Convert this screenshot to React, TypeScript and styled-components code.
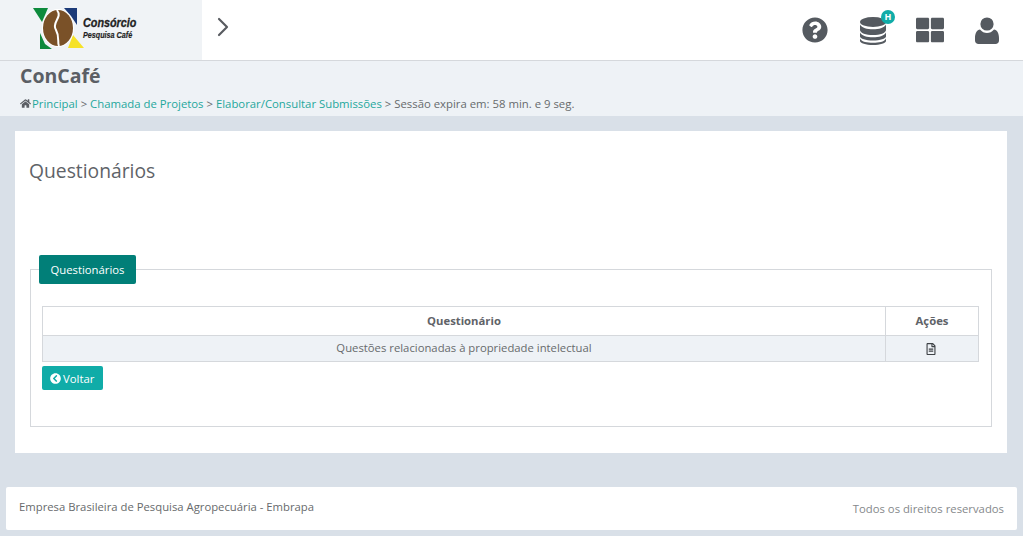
import React, { FC } from "react";
import styled, { createGlobalStyle } from "styled-components";
import { FaQuestionCircle, FaThLarge, FaHome, FaChevronCircleLeft, FaRegFileAlt } from "react-icons/fa";
import { FiChevronRight } from "react-icons/fi";

const GlobalStyle = createGlobalStyle`
  html, body {
    margin: 0;
    padding: 0;
    background: #d9e0e8;
    font-family: "Open Sans", "DejaVu Sans", sans-serif;
    color: #676a6c;
    overflow: hidden;
  }
  * { box-sizing: border-box; }
`;

const Page = styled.div`
  width: 1023px;
  height: 536px;
  display: flex;
  flex-direction: column;
`;

const TopBar = styled.header`
  height: 61px;
  display: flex;
  align-items: stretch;
  background: #fff;
  border-bottom: 1px solid #d5d8dc;
`;

const LogoBlock = styled.div`
  width: 202px;
  background: #f0f3f6;
  display: flex;
  align-items: flex-start;
  padding: 8px 0 0 33px;
  gap: 4px;
  svg {
    overflow: visible;
  }
`;

const LogoWords = styled.div`
  display: flex;
  flex-direction: column;
  align-items: flex-start;
  padding-top: 9px;
  font-family: "Liberation Sans", sans-serif;
  font-style: italic;
  font-weight: 700;
  color: #1f1f1f;
`;

const LogoTop = styled.span`
  font-size: 12px;
  line-height: 12px;
  transform: scaleX(0.9);
  transform-origin: left;
  white-space: nowrap;
  -webkit-text-stroke: 0.3px #1f1f1f;
`;

const LogoBottom = styled.span`
  margin-top: 1px;
  font-size: 9px;
  line-height: 10px;
  transform: scaleX(0.8);
  transform-origin: left;
  white-space: nowrap;
  -webkit-text-stroke: 0.2px #1f1f1f;
`;

const Toggle = styled.div`
  display: flex;
  align-items: center;
  padding: 0 0 6px 5px;
  color: #585b60;
`;

const TopIcons = styled.nav`
  margin-left: auto;
  display: flex;
  align-items: center;
  padding: 0 7px 0 0;
  color: #555a60;
`;

const TopIcon = styled.div<{ $w: number; $top?: number }>`
  position: relative;
  width: ${(p) => p.$w}px;
  padding-top: ${(p) => p.$top ?? 0}px;
  display: flex;
  justify-content: center;
`;

const Badge = styled.span`
  position: absolute;
  top: -5px;
  right: 6px;
  width: 14px;
  height: 14px;
  border-radius: 50%;
  background: #10aca8;
  color: #fff;
  font-size: 9px;
  font-weight: 700;
  line-height: 14px;
  text-align: center;
`;

const SubHeader = styled.section`
  height: 55px;
  background: #eef2f6;
  padding: 2px 20px 0;
`;

const Title = styled.h1`
  margin: 0;
  font-size: 19.5px;
  line-height: 26px;
  font-weight: 700;
  color: #5b5f65;
`;

const Crumbs = styled.div`
  margin-top: 7px;
  font-size: 11.35px;
  line-height: 16px;
  color: #676a6c;
  white-space: nowrap;
  svg {
    font-size: 11px;
    vertical-align: -1px;
    margin-right: 1px;
    color: #5b5f65;
  }
`;

const CrumbLink = styled.a`
  color: #1ea79c;
`;

const Card = styled.main`
  margin: 15px 16px 0 15px;
  height: 322px;
  background: #fff;
  padding: 26px 15px 0 14px;
`;

const CardTitle = styled.h2`
  margin: 0;
  font-size: 19.3px;
  line-height: 28px;
  font-weight: 400;
  color: #5f6368;
`;

const FieldSet = styled.div`
  margin: 84px 0 0 1px;
  padding: 0 12px 0 11px;
  height: 158px;
  border: 1px solid #d5d8dc;
  position: relative;
`;

const Legend = styled.div`
  position: absolute;
  top: -15px;
  left: 8px;
  width: 97px;
  height: 29px;
  background: #017f78;
  border-radius: 2px;
  color: #fff;
  font-size: 11.3px;
  line-height: 29px;
  text-align: center;
`;

const Table = styled.table`
  margin-top: 36px;
  width: 100%;
  border-collapse: collapse;
  font-size: 11.3px;
  table-layout: fixed;
`;

const Th = styled.th<{ $w?: number }>`
  height: 29px;
  padding: 0 0 1px;
  border: 1px solid #d5d8dc;
  color: #5f6368;
  font-weight: 700;
  width: ${(p) => (p.$w ? `${p.$w}px` : "auto")};
`;

const Td = styled.td`
  height: 26px;
  padding: 0 0 2px;
  border: 1px solid #d5d8dc;
  background: #eef2f6;
  text-align: center;
  color: #676a6c;
  svg {
    font-size: 12px;
    color: #3f4347;
    vertical-align: -3px;
    margin-right: 2px;
  }
`;

const BackButton = styled.button`
  margin-top: 4px;
  display: flex;
  align-items: center;
  gap: 2px;
  width: 61px;
  height: 24px;
  padding: 0 0 0 8px;
  border: 0;
  border-radius: 2px;
  background: #10aca8;
  color: #fff;
  font-family: inherit;
  font-size: 11.3px;
  svg {
    font-size: 11px;
  }
`;

const Footer = styled.footer`
  margin: 34px 6px 0 6px;
  height: 43px;
  background: #fff;
  border-radius: 2px;
  display: flex;
  justify-content: space-between;
  padding: 0 13px 0 13px;
  font-size: 11.3px;
`;

const FooterLeft = styled.span`
  padding-top: 12px;
  color: #676a6c;
`;

const FooterRight = styled.span`
  padding-top: 14px;
  color: #85888b;
`;

const LogoMark: FC = () => (
  <svg width="46" height="41" viewBox="0 0 46 41">
    <polygon points="0,0 15,0 9,14" fill="#0d8a3c" />
    <polygon points="7,25 12,36 19,41 7,41" fill="#0d8a3c" />
    <polygon points="31,0 44,0 44,17 38,8" fill="#1c3a78" />
    <polygon points="40,27 51,40 35,40" fill="#f6e227" />
    <ellipse cx="25" cy="20" rx="16" ry="19" fill="#fff" />
    <ellipse cx="25" cy="20" rx="15" ry="18" fill="#7a5128" />
    <path d="M24 2 C30 10 18 14 23 22 C27 29 24 34 26 38" stroke="#fff" strokeWidth="2" fill="none" />
  </svg>
);

// stacked discs, the package icon has fewer bands than the reference
const DatabaseIcon: FC = () => (
  <svg width="26" height="28" viewBox="0 0 26 28" fill="currentColor">
    <ellipse cx="13" cy="5" rx="13" ry="5" />
    <path d="M0 7.5C2 11 7 12.2 13 12.2S24 11 26 7.5V13C26 16 20 18 13 18S0 16 0 13Z" />
    <path d="M0 15.5C2 19 7 20.2 13 20.2S24 19 26 15.5V19.5C26 21.7 20 23.5 13 23.5S0 21.7 0 19.5Z" />
    <path d="M0 21.5C2 25 7 25.8 13 25.8S24 25 26 21.5V24C26 26.2 20 28 13 28S0 26.2 0 24Z" />
  </svg>
);

const UserIcon: FC = () => (
  <svg width="24" height="27" viewBox="0 0 24 27" fill="currentColor">
    <circle cx="12" cy="7" r="6.6" />
    <path d="M5 12.5C7 15 9.4 16 12 16S17 15 19 12.5C22 13 24 16 24 21V23.5C24 25.7 22.5 27 20.5 27H3.5C1.5 27 0 25.7 0 23.5V21C0 16 2 13 5 12.5Z" />
  </svg>
);

const App: FC = () => {
  return (
    <Page>
      <GlobalStyle />
      <TopBar>
        <LogoBlock>
          <LogoMark />
          <LogoWords>
            <LogoTop>Consórcio</LogoTop>
            <LogoBottom>Pesquisa Café</LogoBottom>
          </LogoWords>
        </LogoBlock>
        <Toggle>
          <FiChevronRight size={32} strokeWidth={1.6} />
        </Toggle>
        <TopIcons>
          <TopIcon $w={60}>
            <FaQuestionCircle size={26} />
          </TopIcon>
          <TopIcon $w={56} $top={2}>
            <DatabaseIcon />
            <Badge>H</Badge>
          </TopIcon>
          <TopIcon $w={57}>
            <FaThLarge size={28} />
          </TopIcon>
          <TopIcon $w={58}>
            <UserIcon />
          </TopIcon>
        </TopIcons>
      </TopBar>
      <SubHeader>
        <Title>ConCafé</Title>
        <Crumbs>
          <FaHome />
          <CrumbLink>Principal</CrumbLink> &gt; <CrumbLink>Chamada de Projetos</CrumbLink> &gt;{" "}
          <CrumbLink>Elaborar/Consultar Submissões</CrumbLink> &gt; Sessão expira em: 58 min. e 9 seg.
        </Crumbs>
      </SubHeader>
      <Card>
        <CardTitle>Questionários</CardTitle>
        <FieldSet>
          <Legend>Questionários</Legend>
          <Table>
            <thead>
              <tr>
                <Th>Questionário</Th>
                <Th $w={93}>Ações</Th>
              </tr>
            </thead>
            <tbody>
              <tr>
                <Td>Questões relacionadas à propriedade intelectual</Td>
                <Td>
                  <FaRegFileAlt />
                </Td>
              </tr>
            </tbody>
          </Table>
          <BackButton>
            <FaChevronCircleLeft />
            Voltar
          </BackButton>
        </FieldSet>
      </Card>
      <Footer>
        <FooterLeft>Empresa Brasileira de Pesquisa Agropecuária - Embrapa</FooterLeft>
        <FooterRight>Todos os direitos reservados</FooterRight>
      </Footer>
    </Page>
  );
};

export default App;
